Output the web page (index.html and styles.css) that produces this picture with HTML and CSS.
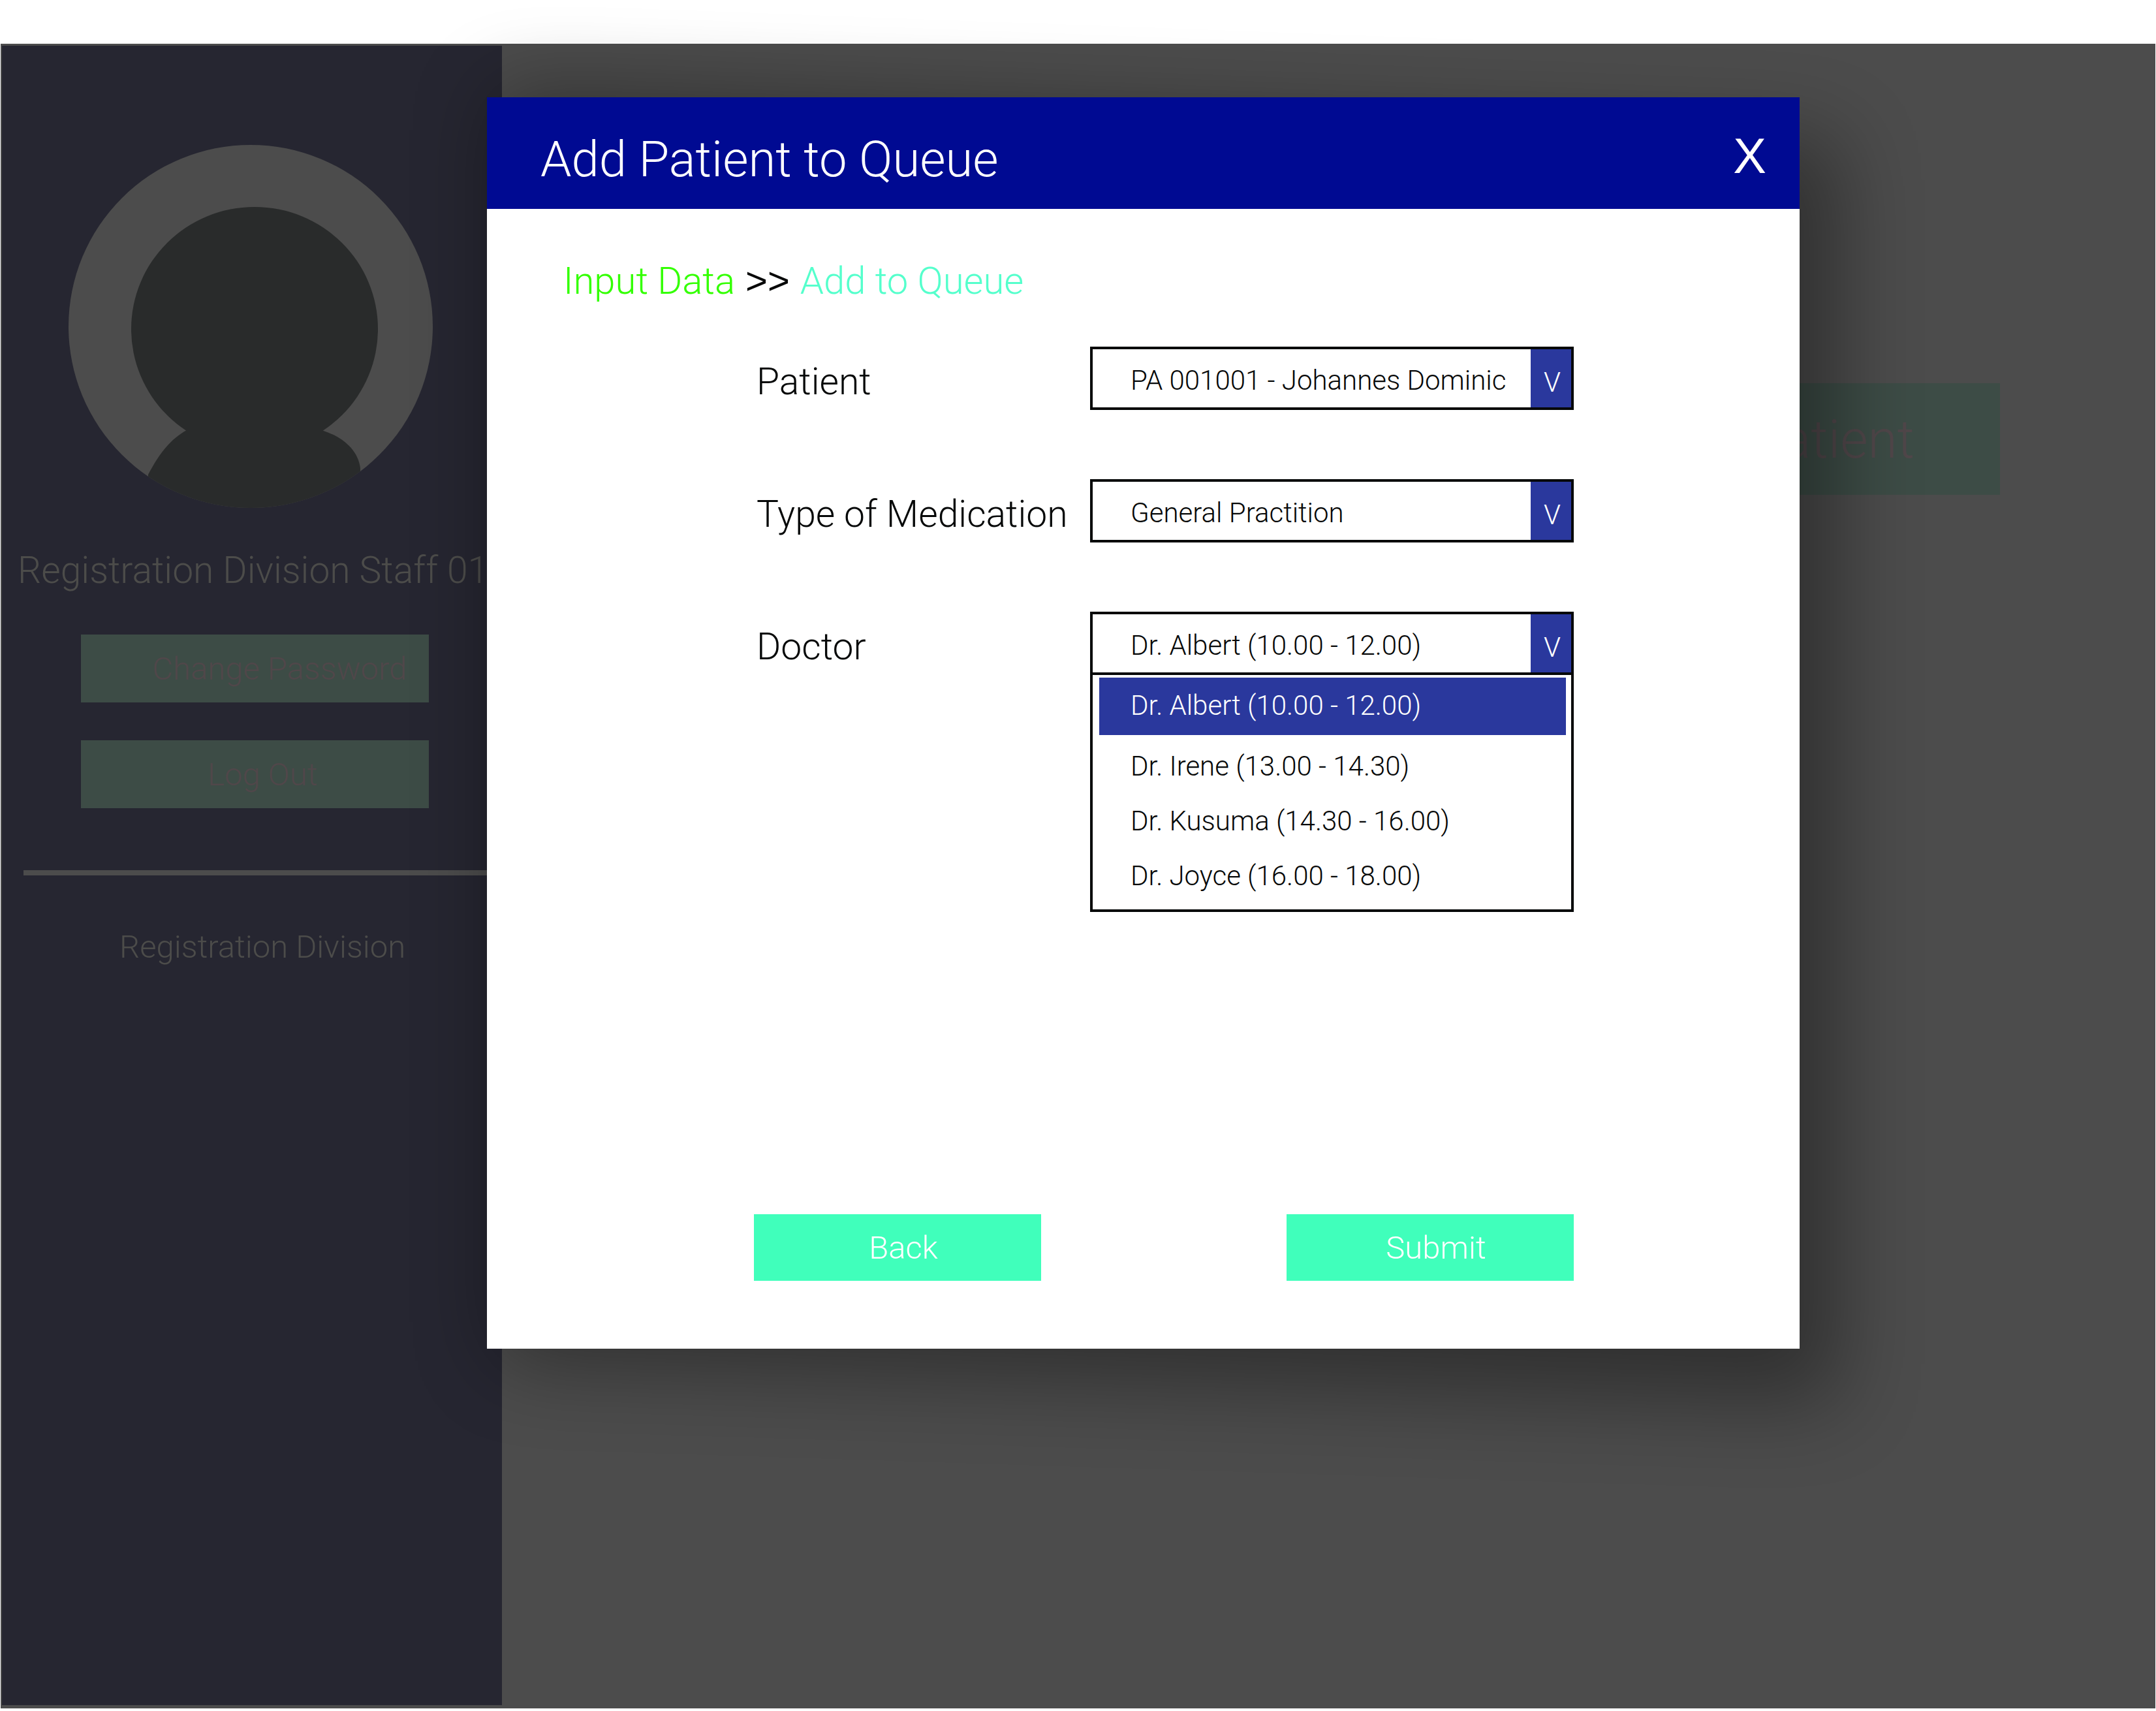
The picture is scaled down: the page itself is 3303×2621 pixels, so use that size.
FILE: index.html
```html
<!DOCTYPE html>
<html lang="en">
<head>
<meta charset="utf-8">
<title>Add Patient to Queue</title>
<link rel="stylesheet" href="styles.css">
</head>
<body>
<div class="screen">
  <aside class="sidebar">
    <svg class="avatar" viewBox="0 0 558 558" aria-hidden="true">
      <clipPath id="disc"><ellipse cx="279" cy="278" rx="279" ry="278"/></clipPath>
      <ellipse cx="279" cy="278" rx="279" ry="278" fill="#4c4c4c"/>
      <g clip-path="url(#disc)" fill="#292b2b">
        <ellipse cx="285" cy="282" rx="189" ry="187"/>
        <path d="M181 437C155 451 137 476 122 505L122 558H447V495C443 466 419 447 388 437Z"/>
      </g>
    </svg>
    <p class="staff">Registration Division Staff 01</p>
    <nav class="account">
      <button type="button" class="account-button account-button-shifted">Change Password</button>
      <button type="button" class="account-button">Log Out</button>
    </nav>
    <hr class="rule">
    <p class="division">Registration Division</p>
  </aside>
  <main class="content">
    <button type="button" class="patient-button">Patient</button>
  </main>

  <section class="modal" role="dialog" aria-labelledby="modal-title">
    <svg class="shadow" viewBox="0 0 2600 2400" aria-hidden="true">
      <filter id="soft" x="-10%" y="-10%" width="120%" height="120%"><feGaussianBlur stdDeviation="64"/></filter>
      <path d="M314 240L2369 316V2251L314 2186Z" filter="url(#soft)"/>
    </svg>
    <header class="modal-header">
      <h1 class="modal-title" id="modal-title">Add Patient to Queue</h1>
      <button type="button" class="close" aria-label="Close">X</button>
    </header>
    <form class="modal-body">
      <nav class="steps"><a href="#input" class="step-done">Input Data</a><span class="step-separator">&gt;&gt;</span><a href="#queue" class="step-current">Add to Queue</a></nav>
      <div class="field">
        <label class="label" for="patient">Patient</label>
        <div class="picker">
          <select class="select" id="patient"><option>PA 001001 - Johannes Dominic</option></select>
          <span class="arrow">V</span>
        </div>
      </div>
      <div class="field">
        <label class="label" for="medication">Type of Medication</label>
        <div class="picker">
          <select class="select" id="medication"><option>General Practition</option></select>
          <span class="arrow">V</span>
        </div>
      </div>
      <div class="field">
        <label class="label" for="doctor">Doctor</label>
        <div class="picker">
          <select class="select" id="doctor"><option>Dr. Albert (10.00 - 12.00)</option></select>
          <span class="arrow">V</span>
          <ul class="options" role="listbox">
            <li class="option option-active" role="option" aria-selected="true">Dr. Albert (10.00 - 12.00)</li>
            <li class="option" role="option">Dr. Irene (13.00 - 14.30)</li>
            <li class="option" role="option">Dr. Kusuma (14.30 - 16.00)</li>
            <li class="option" role="option">Dr. Joyce (16.00 - 18.00)</li>
          </ul>
        </div>
      </div>
      <footer class="actions">
        <button type="button" class="action">Back</button>
        <button type="submit" class="action">Submit</button>
      </footer>
    </form>
  </section>
</div>
</body>
</html>
```
FILE: styles.css
```css
* {
  box-sizing: border-box;
}

body {
  margin: 0;
  background: #fff;
  font-family: Roboto, "Liberation Sans", sans-serif;
  font-weight: 300;
  color: #060808;
}

h1,
p,
ul {
  margin: 0;
  padding: 0;
  font-weight: 300;
}

button,
select {
  margin: 0;
  padding: 0;
  border: 0;
  border-radius: 0;
  font: inherit;
}

a {
  text-decoration: none;
}

.screen {
  position: relative;
  display: flex;
  min-height: calc(100vh - 71px);
  margin: 67px 1px 4px;
  padding: 3px 0 5px 2px;
  background: #4c4c4c;
}

.sidebar {
  display: flex;
  flex-direction: column;
  width: 766px;
  padding-top: 152px;
  background: #262631;
  color: #4c4c4a;
}

.avatar {
  width: 558px;
  height: 558px;
  margin-left: 102px;
}

.staff {
  margin: 60px 0 0 24px;
  font-size: 57px;
  line-height: 68px;
  white-space: nowrap;
}

.account {
  display: flex;
  flex-direction: column;
  gap: 58px;
  margin: 64px 0 0 121px;
}

.account-button {
  width: 533px;
  height: 104px;
  padding-left: 24px;
  background: #3d4c46;
  color: #50474a;
  font-size: 49px;
}

.account-button-shifted {
  padding-left: 76px;
}

.rule {
  width: 730px;
  height: 8px;
  margin: 95px 0 0 33px;
  border: 0;
  background: #4c4c4c;
}

.division {
  margin: 80px 0 0 180px;
  font-size: 49px;
  line-height: 60px;
}

.content {
  display: flex;
  flex: 1;
  align-items: flex-start;
  justify-content: flex-end;
  padding: 517px 238px 0 0;
}

.patient-button {
  width: 700px;
  height: 171px;
  padding-right: 131px;
  background: #3d4c46;
  color: #50474a;
  font-size: 82px;
  text-align: right;
}

.modal {
  position: absolute;
  top: 82px;
  left: 745px;
  right: 545px;
}

.shadow {
  position: absolute;
  top: -250px;
  left: -300px;
  width: 2600px;
  height: 2400px;
  fill: #000;
  opacity: 0.37;
}

.modal-header {
  position: relative;
  display: flex;
  align-items: flex-start;
  justify-content: space-between;
  height: 171px;
  padding: 50px 51px 0 82px;
  background: #000a92;
  color: #fff;
}

.modal-title {
  font-size: 76px;
  line-height: 90px;
}

.close {
  background: none;
  color: #fff;
  font-family: "Liberation Sans", sans-serif;
  font-size: 76px;
  font-weight: 400;
  line-height: 80px;
}

.modal-body {
  position: relative;
  display: flex;
  flex-direction: column;
  height: 1746px;
  padding: 76px 346px 104px 409px;
  background: #fff;
}

.steps {
  display: flex;
  gap: 16px;
  margin-left: -292px;
  font-size: 58px;
  line-height: 68px;
}

.step-done {
  color: #3f0;
}

.step-separator {
  font-family: "Liberation Sans", sans-serif;
}

.step-current {
  color: #5fc;
}

.field {
  display: grid;
  grid-template-columns: 515px 1fr;
  align-items: center;
  margin-bottom: 106px;
}

.steps + .field {
  margin-top: 67px;
}

.label {
  padding: 10px 0 0 4px;
  font-size: 57px;
  line-height: 68px;
  white-space: nowrap;
}

.picker {
  position: relative;
  display: flex;
  height: 97px;
  border: 4px solid #060808;
}

.select {
  flex: 1;
  padding: 6px 0 0 58px;
  appearance: none;
  background: #fff;
  color: #060808;
  font-size: 42px;
}

.arrow {
  width: 62px;
  height: 89px;
  padding-left: 4px;
  background: #2a389d;
  color: #fff;
  font-size: 42px;
  line-height: 102px;
  text-align: center;
}

.options {
  position: absolute;
  top: 89px;
  left: -4px;
  right: -4px;
  padding: 4px 8px 9px 10px;
  border: 4px solid #060808;
  background: #fff;
  list-style: none;
}

.option {
  padding-left: 48px;
  font-size: 42px;
  line-height: 84px;
}

.option-active {
  height: 88px;
  margin-bottom: 6px;
  background: #2a389d;
  color: #fff;
  line-height: 86px;
}

.actions {
  display: flex;
  justify-content: space-between;
  margin-top: auto;
}

.action {
  width: 440px;
  height: 102px;
  padding-left: 18px;
  background: #40ffbb;
  color: #fff;
  font-size: 49px;
}
```
